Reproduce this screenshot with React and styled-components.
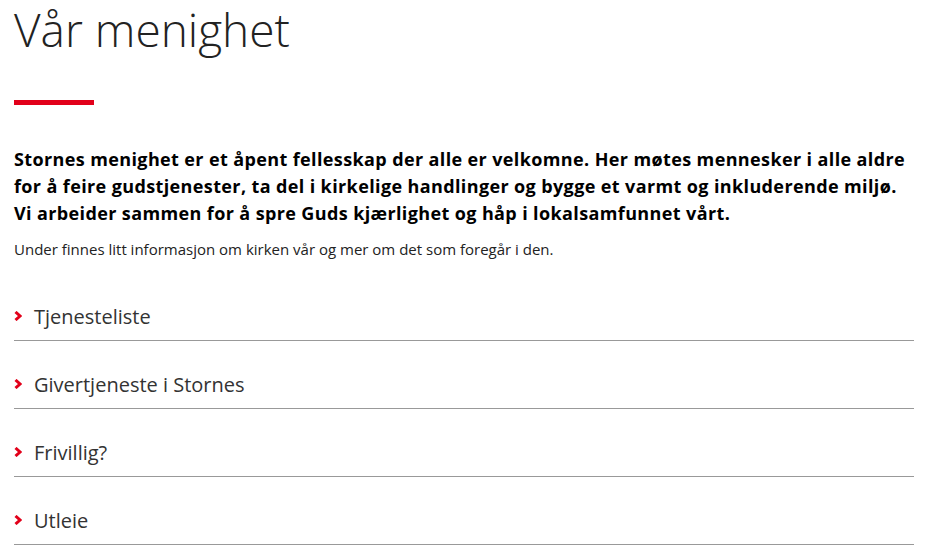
import styled, { createGlobalStyle } from 'styled-components';

const GlobalStyle = createGlobalStyle`
  body {
    margin: 0;
    background: #fff;
    font-family: "Open Sans", "Liberation Sans", sans-serif;
    color: #222;
  }
`;

const items = ['Tjenesteliste', 'Givertjeneste i Stornes', 'Frivillig?', 'Utleie'];

function App() {
  return (
    <>
      <GlobalStyle />
      <SPage>
        <STitle>Vår menighet</STitle>
        <SBar />
        <SLead>
          Stornes menighet er et åpent fellesskap der alle er velkomne. Her møtes mennesker i alle aldre
          for å feire gudstjenester, ta del i kirkelige handlinger og bygge et varmt og inkluderende miljø.
          Vi arbeider sammen for å spre Guds kjærlighet og håp i lokalsamfunnet vårt.
        </SLead>
        <SIntro>Under finnes litt informasjon om kirken vår og mer om det som foregår i den.</SIntro>
        <SList>
          {items.map((item) => (
            <SRow key={item}>
              <SChevron viewBox="0 0 8 10" aria-hidden="true">
                <polyline points="1.5,1 6,5 1.5,9" />
              </SChevron>
              {item}
            </SRow>
          ))}
        </SList>
      </SPage>
    </>
  );
}

const SPage = styled.div`
  width: 900px;
  padding: 0 14px;
`;

const STitle = styled.h1`
  margin: 0;
  font-size: 46px;
  font-weight: 300;
  line-height: 1.3;
  color: #222;
`;

const SBar = styled.div`
  width: 80px;
  height: 5px;
  margin-top: 40px;
  background: #e2001a;
`;

const SLead = styled.p`
  margin: 41px 0 0;
  font-size: 18px;
  font-weight: 700;
  line-height: 27px;
  letter-spacing: 0.38px;
  color: #000;
`;

const SIntro = styled.p`
  margin: 12px 0 0;
  font-size: 15px;
  line-height: 21px;
  color: #222;
`;

const SList = styled.div`
  margin-top: 43px;
`;

const SRow = styled.div`
  display: flex;
  align-items: center;
  gap: 12px;
  padding: 30px 0 10px;
  border-bottom: 1px solid #999;
  font-size: 20px;
  line-height: 27px;
  color: #333;
  &:first-child {
    padding-top: 0;
  }
`;

const SChevron = styled.svg`
  width: 8px;
  height: 10px;
  flex: none;
  fill: none;
  stroke: #e2001a;
  stroke-width: 3;
`;

export default App;
